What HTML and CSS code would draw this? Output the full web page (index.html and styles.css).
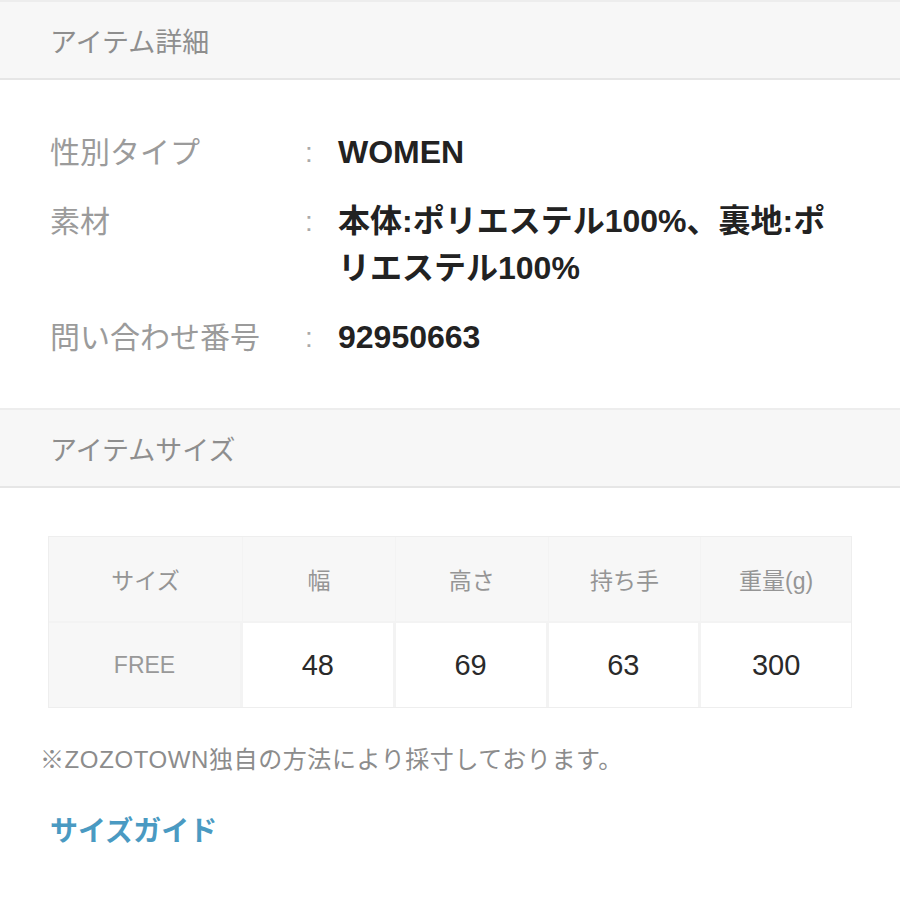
FILE: index.html
```html
<!DOCTYPE html>
<html lang="ja">
<head>
<meta charset="utf-8">
<link rel="stylesheet" href="styles.css">
</head>
<body>
<section class="band band-first"><h2 class="band-title">アイテム詳細</h2></section>
<dl class="details">
  <div class="row"><dt>性別タイプ</dt><dd><span class="colon">:</span><span class="val">WOMEN</span></dd></div>
  <div class="row"><dt>素材</dt><dd><span class="colon">:</span><span class="val">本体:ポリエステル100%、裏地:ポリエステル100%</span></dd></div>
  <div class="row"><dt>問い合わせ番号</dt><dd><span class="colon">:</span><span class="val">92950663</span></dd></div>
</dl>
<section class="band"><h2 class="band-title">アイテムサイズ</h2></section>
<div class="size-wrap">
  <div class="size-table">
    <div class="th">サイズ</div>
    <div class="th">幅</div>
    <div class="th">高さ</div>
    <div class="th">持ち手</div>
    <div class="th">重量(g)</div>
    <div class="th th-row">FREE</div>
    <div class="td">48</div>
    <div class="td">69</div>
    <div class="td">63</div>
    <div class="td">300</div>
  </div>
  <p class="note">※ZOZOTOWN独自の方法により採寸しております。</p>
  <a class="guide" href="#">サイズガイド</a>
</div>
</body>
</html>
```
FILE: styles.css
```css
* { box-sizing: border-box; }
html, body { margin: 0; padding: 0; background: #fff; }
body {
  font-family: "Liberation Sans", "Noto Sans CJK JP", sans-serif;
  width: 900px;
}
.band {
  background: #f7f7f7;
  border-top: 2px solid #ededed;
  border-bottom: 2px solid #e6e6e6;
  height: 80px;
  display: flex;
  align-items: center;
  padding-left: 50px;
}
.band-title {
  margin: 0;
  font-size: 27px;
  font-weight: normal;
  color: #8e8e8e;
}
.details {
  margin: 0;
  padding: 49px 0 47px 50px;
  display: flex;
  flex-direction: column;
  gap: 22px;
}
.row { display: flex; }
.row dt {
  width: 255px;
  flex: none;
  font-size: 30px;
  line-height: 47px;
  color: #9b9b9b;
}
.row dd {
  margin: 0;
  display: flex;
  font-size: 32px;
  line-height: 47px;
}
.colon {
  width: 33px;
  flex: none;
  color: #aaa;
  font-size: 28px;
}
.val {
  font-weight: bold;
  color: #222;
  width: 500px;
}
.size-wrap { padding: 48px 48px 0 48px; }
.size-table {
  display: grid;
  grid-template-columns: 191px 1fr 1fr 1fr 1fr;
  grid-template-rows: 84px 84px;
  gap: 2px 3px;
  background: #f3f3f3;
  border: 1px solid #eeeeee;
  width: 804px;
}
.th, .td {
  display: flex;
  align-items: center;
  justify-content: center;
}
.th {
  background: #f7f7f7;
  color: #959595;
  font-size: 23px;
}
.size-table .th:nth-child(-n+4) { margin-right: -2px; }
.th-row { color: #999; }
.td {
  background: #fff;
  color: #2a2a2a;
  font-size: 29px;
}
.note {
  margin: 36px 0 0 -8px;
  font-size: 24px;
  line-height: 32px;
  letter-spacing: 0.6px;
  color: #8c8c8c;
}
.guide {
  display: inline-block;
  margin-top: 33px;
  margin-left: 2px;
  font-size: 28px;
  font-weight: bold;
  color: #4a9ac2;
  text-decoration: none;
}
```
